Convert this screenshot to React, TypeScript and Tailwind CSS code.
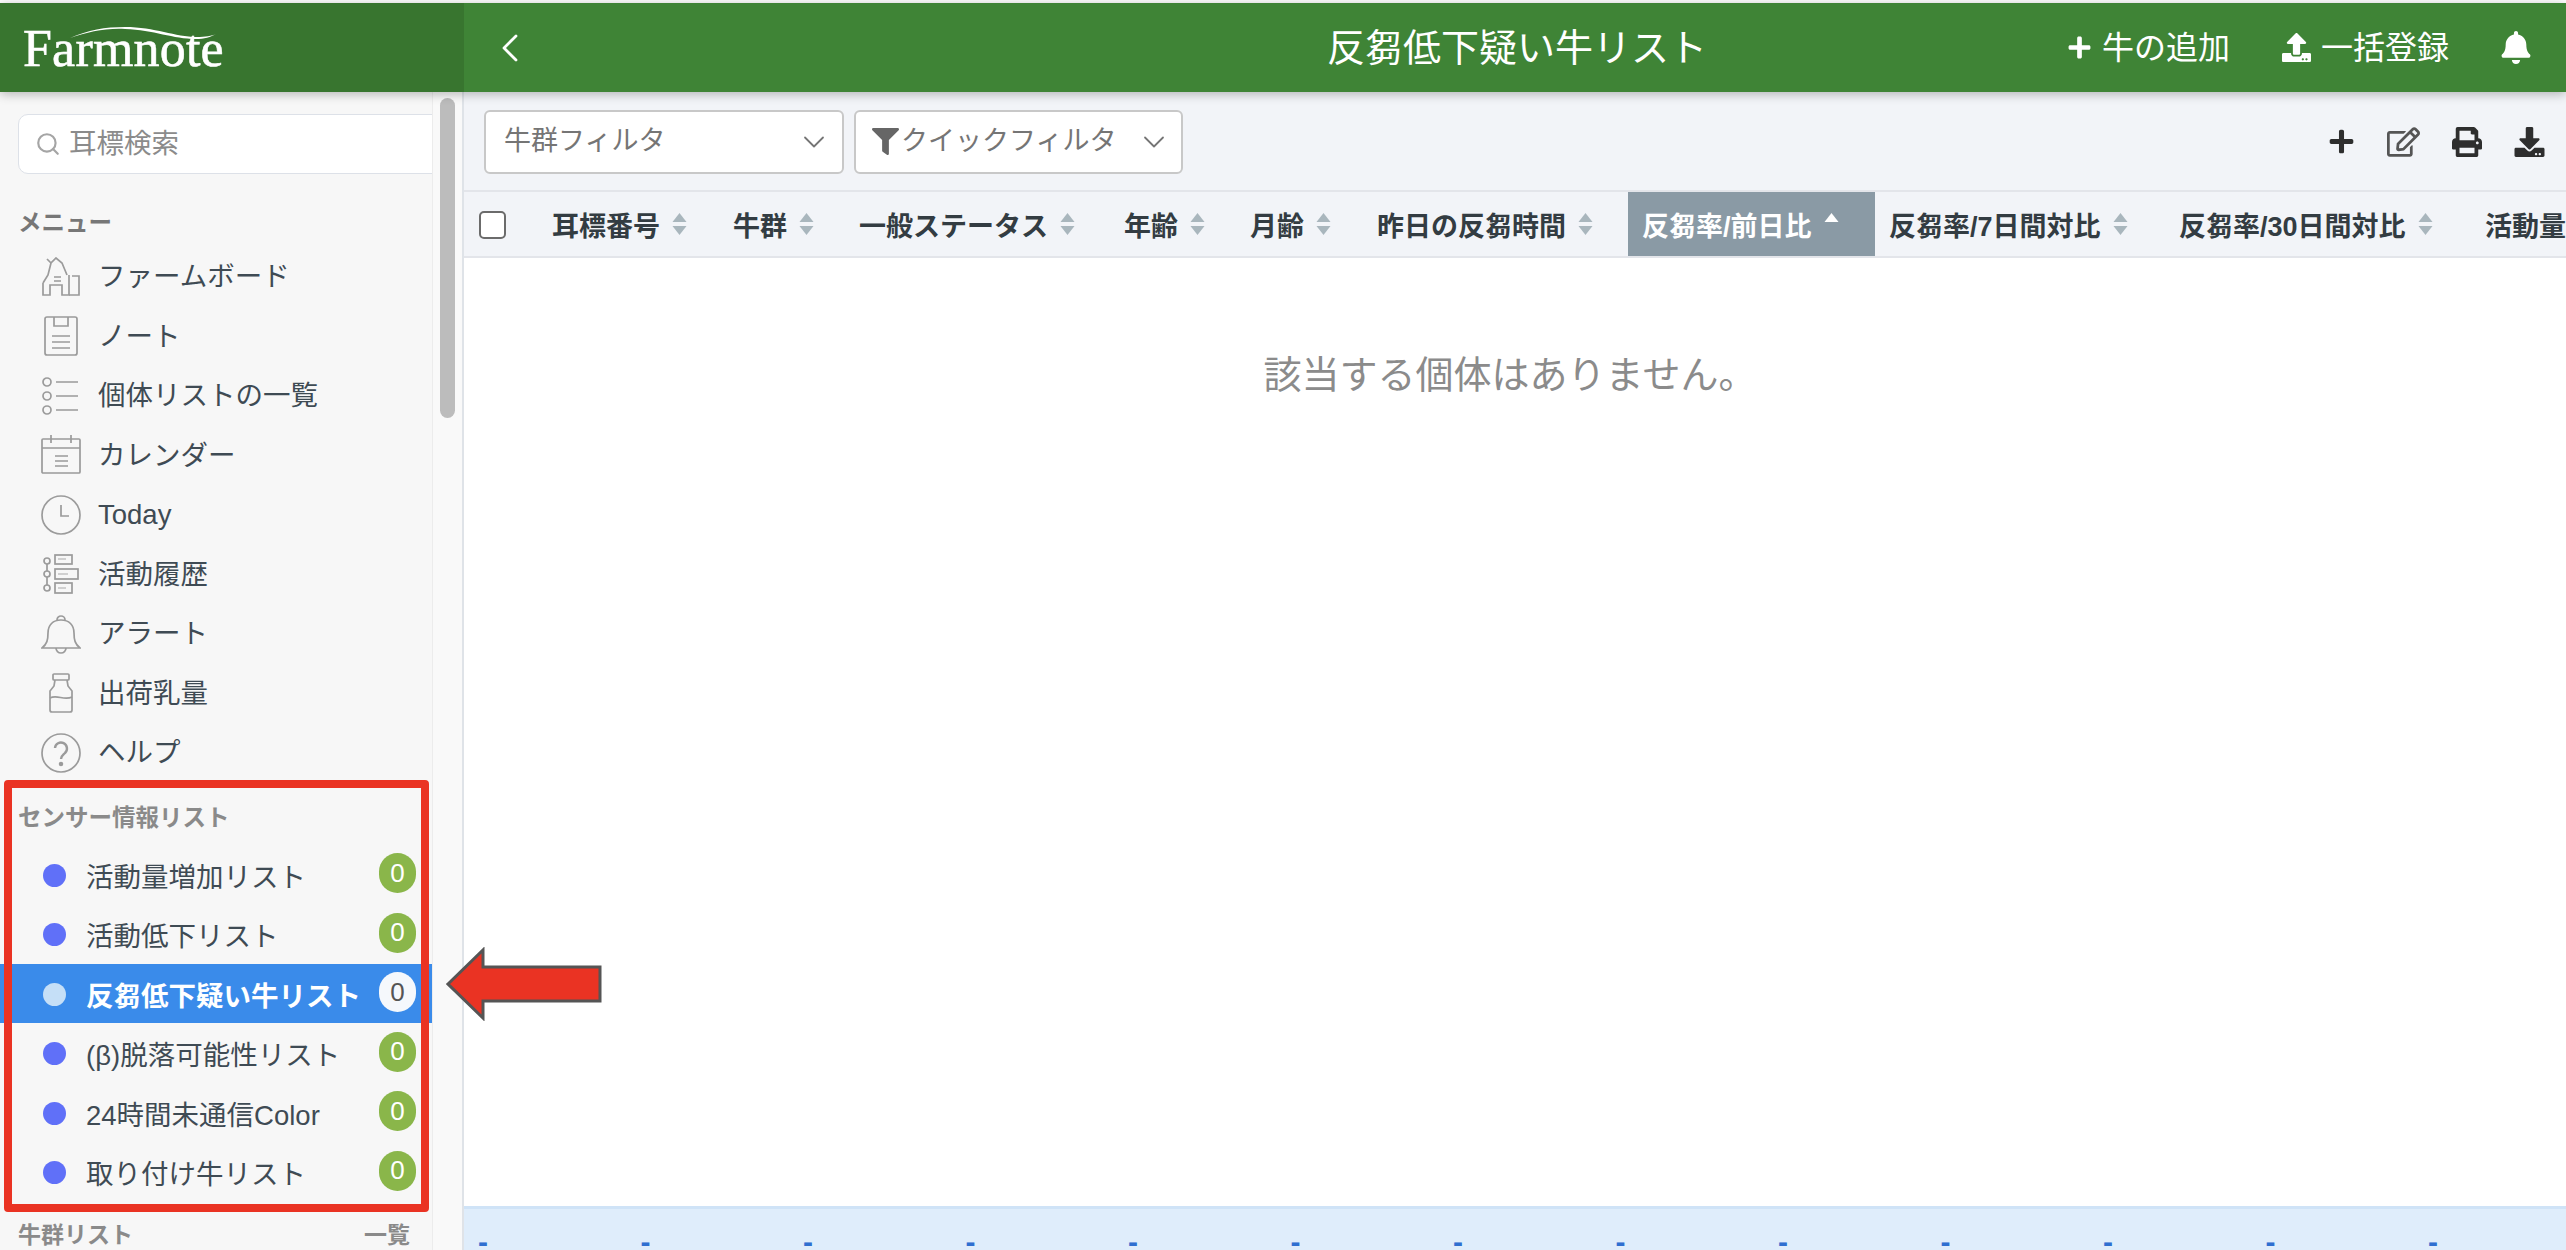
import React from 'react';
import { ChevronDown, ChevronLeft, Search } from 'lucide-react';
import { FaBell, FaDownload, FaFilter, FaPlus, FaPrint, FaRegEdit, FaUpload } from 'react-icons/fa';

const icon = { width: 40, height: 40, viewBox: '0 0 40 40', fill: 'none', stroke: '#9b9b9b', strokeWidth: 1.7 };

const BarnIcon = () => (
  <svg {...icon}>
    <path d="M2 26l5-8 3-12 5-5 6 5 5 12M2 26v12h7V28h12v10h7V18" />
    <path d="M10 6L6 2M13 20h7M13 24h7M31 19h7v19h-10" />
  </svg>
);
const NoteIcon = () => (
  <svg {...icon}>
    <rect x="4" y="1" width="32" height="38" rx="2" />
    <path d="M13 1v9h14V1M11 20h18M11 26h18M11 32h18" />
  </svg>
);
const ListIcon = () => (
  <svg {...icon}>
    <circle cx="6" cy="6" r="4" />
    <circle cx="6" cy="20" r="4" />
    <circle cx="6" cy="34" r="4" />
    <path d="M15 6h22M15 20h22M15 34h22" />
  </svg>
);
const CalendarIcon = () => (
  <svg {...icon}>
    <rect x="1" y="4" width="38" height="34" rx="1" />
    <path d="M1 13h38M10 0v8M30 0v8M14 21h13M14 26h13M14 31h13" />
  </svg>
);
const ClockIcon = () => (
  <svg {...icon}>
    <circle cx="20" cy="20" r="19" />
    <path d="M20 10v11h8" />
  </svg>
);
const TimelineIcon = () => (
  <svg {...icon}>
    <circle cx="6" cy="7" r="3" />
    <circle cx="6" cy="20" r="3" />
    <circle cx="6" cy="34" r="3" />
    <path d="M6 10v7M6 23v8" />
    <rect x="14" y="1" width="17" height="9" />
    <rect x="14" y="15" width="23" height="10" />
    <rect x="14" y="29" width="17" height="10" />
    <path d="M17 5h8M17 20h10M17 34h8" stroke="#c4c4c4" />
  </svg>
);
const BellIcon = () => (
  <svg {...icon}>
    <path d="M1 34c5-4 6-8 6-15 0-8 5-13 13-13s13 5 13 13c0 7 1 11 6 15z" />
    <path d="M16 6a4 4 0 018 0M15 34a5 5 0 0010 0" />
  </svg>
);
const BottleIcon = () => (
  <svg {...icon}>
    <rect x="12" y="1" width="16" height="6" rx="1" />
    <path d="M14 7l-1 6-4 5v19a2 2 0 002 2h18a2 2 0 002-2V18l-4-5-1-6" />
    <path d="M9 25c7-4 14 3 22-1" />
  </svg>
);
const HelpIcon = () => (
  <svg {...icon}>
    <circle cx="20" cy="20" r="19" />
    <path d="M14 15a6 6 0 1110 5c-2 2-4 3-4 6" strokeWidth="2.4" />
    <circle cx="20" cy="31" r="1.4" fill="#9b9b9b" />
  </svg>
);

const menu: [React.FC, string][] = [
  [BarnIcon, 'ファームボード'],
  [NoteIcon, 'ノート'],
  [ListIcon, '個体リストの一覧'],
  [CalendarIcon, 'カレンダー'],
  [ClockIcon, 'Today'],
  [TimelineIcon, '活動履歴'],
  [BellIcon, 'アラート'],
  [BottleIcon, '出荷乳量'],
  [HelpIcon, 'ヘルプ'],
];

const sensors = ['活動量増加リスト', '活動低下リスト', '反芻低下疑い牛リスト', '(β)脱落可能性リスト', '24時間未通信Color', '取り付け牛リスト'];

const columns: [string, string][] = [
  ['耳標番号', 'w-[181px]'],
  ['牛群', 'w-[126px]'],
  ['一般ステータス', 'w-[265px]'],
  ['年齢', 'w-[126px]'],
  ['月齢', 'w-[127px]'],
  ['昨日の反芻時間', 'w-[265px]'],
  ['反芻率/前日比', 'w-[247px]'],
  ['反芻率/7日間対比', 'w-[290px]'],
  ['反芻率/30日間対比', 'w-[306px]'],
  ['活動量', 'w-[200px]'],
];

const SortIcon = ({ active }: { active?: boolean }) => (
  <svg width="17" height="24" viewBox="0 0 16 24" className="shrink-0">
    <path d="M8 1l7 9H1z" fill={active ? '#ffffff' : '#a9b6bd'} />
    {!active && <path d="M8 23l7-9H1z" fill="#a9b6bd" />}
  </svg>
);

export default function App() {
  return (
    <div className="relative flex h-screen w-screen flex-col overflow-hidden bg-white pt-[3px] font-['Liberation_Sans','Noto_Sans_CJK_JP',sans-serif] text-[27.5px] text-[#3f4b54]">
      <header className="relative z-10 flex h-[89px] shrink-0 shadow-[0_2px_10px_rgba(0,0,0,0.28)]">
        <div className="relative flex w-[464px] items-center bg-[#38752f] pl-[23px] pt-[2px]">
          <span className="font-['Liberation_Serif',serif] text-[52px] leading-none tracking-[0.2px] text-white [-webkit-text-stroke:0.6px_white]">Farmnote</span>
          <svg width="150" height="16" viewBox="0 0 150 16" className="absolute left-[70px] top-[22px]">
            <path d="M0 13C18 5 35 2 55 2c30 0 50 10 72 10 8 0 15-1 19-3-5 3-12 5-20 5C103 14 84 5 55 4 35 3 18 7 0 13z" fill="#ffffff" />
          </svg>
        </div>
        <div className="grid flex-1 grid-cols-[1fr_auto_1fr] items-center bg-[#3f8436] text-white">
          <ChevronLeft className="ml-[22px] h-[48px] w-[48px]" strokeWidth={1.4} />
          <div className="ml-[4px] pt-[2px] text-[38px]">反芻低下疑い牛リスト</div>
          <div className="flex items-center justify-end gap-[52px] pr-[35px] text-[32px]">
            <div className="flex items-center gap-[10px]">
              <FaPlus className="h-[25px] w-[25px]" />
              <span>牛の追加</span>
            </div>
            <div className="flex items-center gap-[10px]">
              <FaUpload className="h-[29px] w-[29px]" />
              <span>一括登録</span>
            </div>
            <FaBell className="h-[33px] w-[30px]" />
          </div>
        </div>
      </header>

      <div className="flex min-h-0 flex-1">
        <aside className="flex w-[464px] shrink-0 border-r-2 border-[#dfe3e8] bg-[#f9f9f9]">
          <div className="w-[433px] shrink-0 overflow-hidden border-r border-[#ececec] bg-[#f7f7f7]">
            <div className="mb-[35px] ml-[18px] mt-[22px] flex h-[60px] w-[480px] items-center gap-[8px] rounded-[10px] border border-[#dde1e8] bg-white pl-[16px] text-[#8b8b8b]">
              <Search className="h-[26px] w-[26px] text-[#a5a5a5]" strokeWidth={2} />
              <span>耳標検索</span>
            </div>
            <div className="mb-[8px] flex h-[30px] items-center pl-[18px] text-[23.5px] font-bold text-[#777]">メニュー</div>
            {menu.map(([Icon, label]) => (
              <div key={label} className="flex h-[59.5px] items-center gap-[17px] pl-[41px]">
                <Icon />
                <span>{label}</span>
              </div>
            ))}
            <div className="mb-[11px] mt-[21px] flex h-[30px] items-center pl-[18px] text-[23.5px] font-bold text-[#8a8a8a]">センサー情報リスト</div>
            {sensors.map((label, i) => {
              const selected = i === 2;
              return (
                <div key={label} className={`flex h-[59.5px] items-center pl-[43px] pr-[16px] ${selected ? 'bg-[#3a8bea] font-bold text-white' : ''}`}>
                  <span className={`mt-[2px] h-[23px] w-[23px] shrink-0 rounded-full ${selected ? 'bg-[#c5dff7]' : 'bg-[#6070f8]'}`} />
                  <span className="ml-[20px] flex-1 whitespace-nowrap pt-[6px]">{label}</span>
                  <span className={`mb-[2px] flex h-[40px] w-[37px] items-center justify-center rounded-full text-[26px] font-normal ${selected ? 'bg-[#f5f8fc] text-[#555]' : 'bg-[#8ab64a] text-white'}`}>0</span>
                </div>
              );
            })}
            <div className="mt-[19px] flex h-[30px] items-center justify-between pl-[18px] pr-[22px] text-[23px] font-bold text-[#8a8a8a]">
              <span>牛群リスト</span>
              <span>一覧</span>
            </div>
          </div>
          <div className="flex-1 px-[7px] pt-[6px]">
            <div className="h-[320px] rounded-full bg-[#bcbcbc]" />
          </div>
        </aside>

        <main className="flex min-w-0 flex-1 flex-col">
          <div className="flex h-[100px] shrink-0 items-center justify-between border-b-2 border-[#e3e5ea] bg-[#f2f4f8] pl-[20px] pr-[21px] pt-[1px] text-[27px] text-[#757575]">
            <div className="flex gap-[10px]">
              <div className="flex h-[64px] w-[360px] items-center justify-between rounded-[6px] border-2 border-[#c8c8c8] bg-white pl-[18px] pr-[10px]">
                <span>牛群フィルタ</span>
                <ChevronDown className="h-[36px] w-[36px]" strokeWidth={1.2} />
              </div>
              <div className="flex h-[64px] w-[329px] items-center justify-between rounded-[6px] border-2 border-[#c8c8c8] bg-white pl-[16px] pr-[9px]">
                <span className="flex items-center gap-[2px]">
                  <FaFilter className="h-[27px] w-[27px] text-[#666]" />
                  クイックフィルタ
                </span>
                <ChevronDown className="h-[36px] w-[36px]" strokeWidth={1.2} />
              </div>
            </div>
            <div className="flex items-center gap-[32px] text-[#2e2e2e]">
              <FaPlus className="h-[27px] w-[27px]" />
              <FaRegEdit className="h-[30px] w-[33px] text-[#555]" />
              <FaPrint className="h-[30px] w-[30px]" />
              <FaDownload className="h-[30px] w-[31px]" />
            </div>
          </div>

          <div className="flex h-[66px] shrink-0 items-stretch overflow-hidden border-b-2 border-[#e3e5ea] bg-[#f2f4f8] text-[27px] font-bold text-[#333c42]">
            <div className="flex w-[74px] shrink-0 items-center pl-[15px] pt-[2px]">
              <span className="h-[28px] w-[27px] rounded-[5px] border-2 border-[#6b6b6b] bg-white" />
            </div>
            {columns.map(([col, width], i) => (
              <div key={col} className={`flex shrink-0 items-center gap-[11px] whitespace-nowrap pl-[14px] ${width} ${i === 6 ? 'bg-[#8a9aa5] text-white' : ''}`}>
                <span className="pt-[6px]">{col}</span>
                <SortIcon active={i === 6} />
              </div>
            ))}
          </div>

          <div className="flex-1 bg-white pr-[10px] pt-[92px] text-center text-[38px] leading-[50px] text-[#8b8b8b]">該当する個体はありません。</div>

          <div className="flex h-[44px] shrink-0 items-end overflow-hidden border-t-[3px] border-[#cfe3f7] bg-[#dfedfb] pl-[14px] text-[30px] font-bold leading-[16px] text-[#2f6fd0]">
            {Array.from({ length: 13 }).map((_, i) => (
              <span key={i} className="w-[162.5px] shrink-0">-</span>
            ))}
          </div>
        </main>
      </div>

      {/* 注釈の赤枠と矢印 */}
      <div className="pointer-events-none absolute left-[4px] top-[780px] z-20 h-[432px] w-[425px] rounded-[4px] border-[8px] border-[#ea3323]" />
      <svg width="156" height="74" viewBox="0 0 156 74" className="pointer-events-none absolute left-[446px] top-[947px] z-20">
        <path d="M2 37L37 3v17h117v34H37v17z" fill="#ea3323" stroke="#555555" strokeWidth="3" />
      </svg>
    </div>
  );
}
